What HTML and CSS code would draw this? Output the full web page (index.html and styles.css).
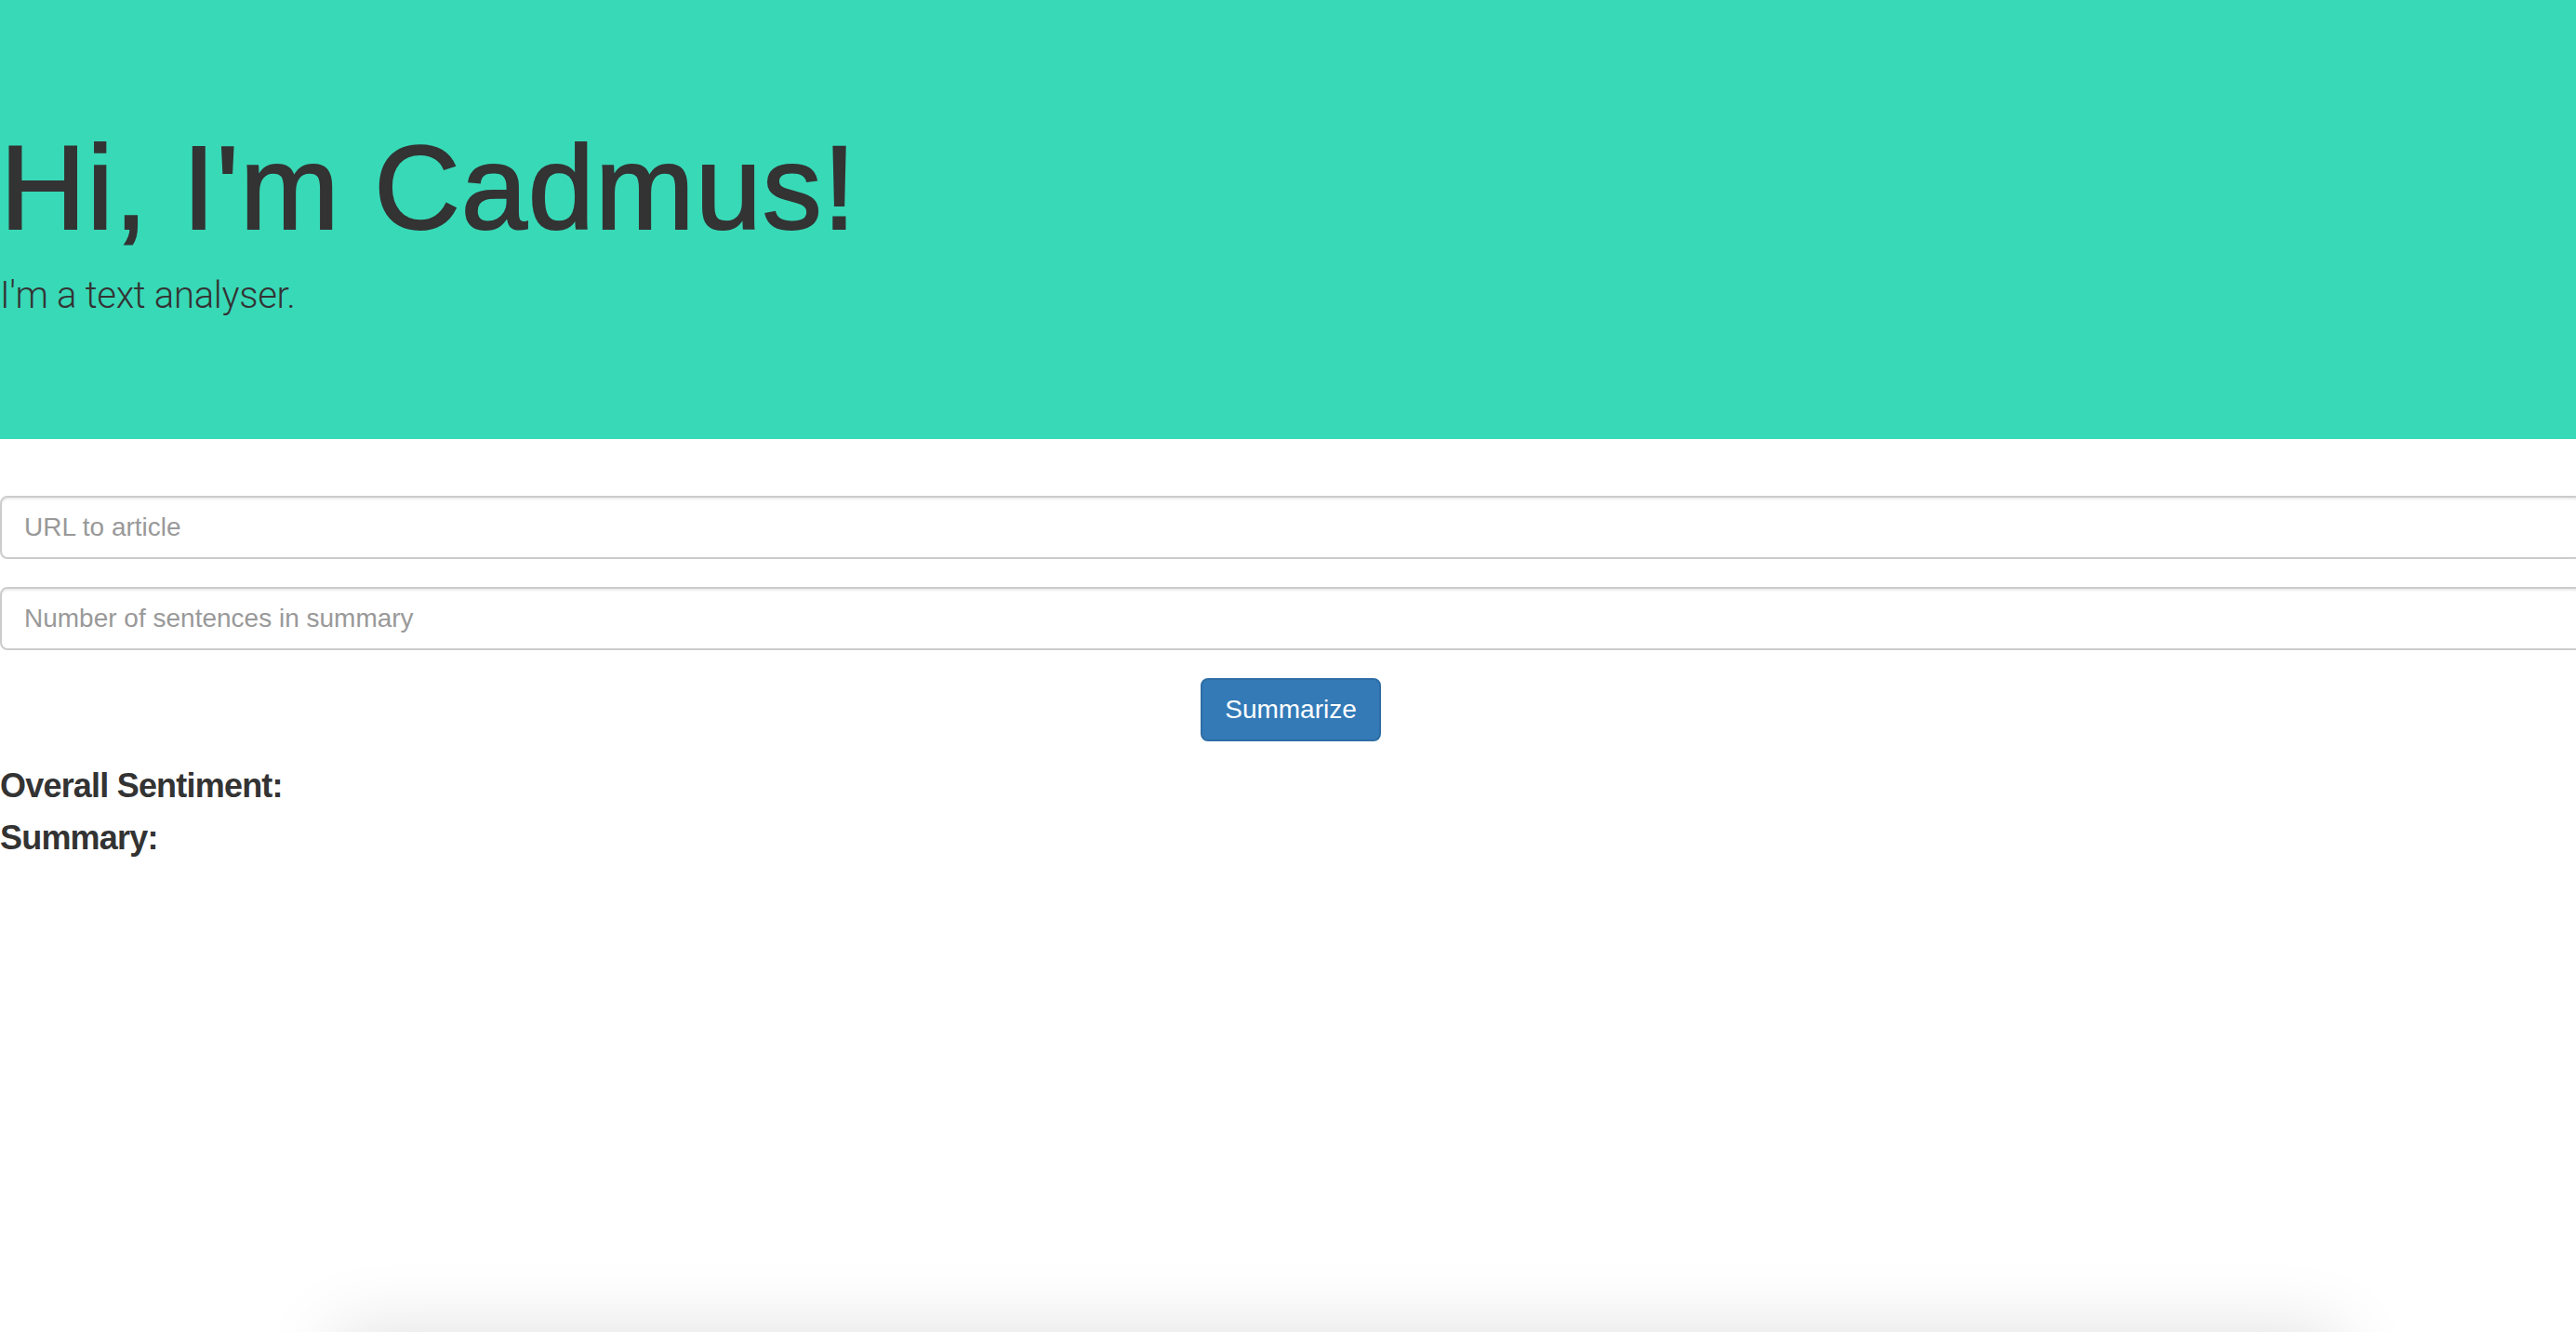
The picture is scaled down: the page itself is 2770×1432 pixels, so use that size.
FILE: index.html
```html
<!DOCTYPE html>
<html lang="en">
<head>
<meta charset="utf-8">
<title>Cadmus</title>
<link rel="stylesheet" href="styles.css">
</head>
<body>
<header class="hero">
  <h1 class="hero-title">Hi, I'm Cadmus!</h1>
  <p class="hero-lead">I'm a text analyser.</p>
</header>
<main class="content">
  <form class="form">
    <input class="field" type="text" placeholder="URL to article">
    <input class="field" type="text" placeholder="Number of sentences in summary">
    <div class="actions">
      <button class="btn" type="button">Summarize</button>
    </div>
  </form>
  <section class="results">
    <h4 class="result-title">Overall Sentiment:</h4>
    <h4 class="result-title">Summary:</h4>
  </section>
</main>
<div class="panel"></div>
</body>
</html>
```

FILE: styles.css
```css
html, body {
  margin: 0;
  padding: 0;
  height: 100%;
  overflow: hidden;
  background: #fff;
}

body {
  display: flex;
  flex-direction: column;
  font-family: "Liberation Sans", Arial, sans-serif;
  color: #333;
}

.hero {
  background: #38d9b7;
  height: 472px;
  box-sizing: border-box;
  padding-top: 132px;
  flex-shrink: 0;
}

.hero-title {
  margin: 0;
  font-family: "Liberation Sans", Arial, sans-serif;
  font-weight: 400;
  font-size: 128px;
  line-height: 1.1;
  letter-spacing: 1px;
  -webkit-text-stroke: 2px #333;
  color: #333;
}

.hero-lead {
  margin: 17px 0 0;
  font-family: "Roboto", "Liberation Sans", sans-serif;
  font-weight: 300;
  font-size: 40px;
  line-height: 1.4;
  letter-spacing: -0.3px;
  color: #333;
}

.content {
  flex: 1 1 auto;
  width: calc(100% + 6px);
}

.form {
  margin-top: 61px;
  display: flex;
  flex-direction: column;
  gap: 30px;
}

.field {
  display: block;
  box-sizing: border-box;
  width: 100%;
  height: 68px;
  margin: 0;
  padding: 12px 24px;
  border: 2px solid #ccc;
  border-radius: 8px;
  box-shadow: inset 0 2px 2px rgba(0, 0, 0, 0.075);
  font-family: "Liberation Sans", Arial, sans-serif;
  font-size: 28px;
  color: #555;
  background: #fff;
  outline: none;
}

.field::placeholder {
  color: #999;
}

.actions {
  display: flex;
  justify-content: center;
}

.btn {
  box-sizing: border-box;
  height: 68px;
  padding: 12px 24px;
  border: 2px solid #2e6da4;
  border-radius: 8px;
  background: #337ab7;
  color: #fff;
  font-family: "Liberation Sans", Arial, sans-serif;
  font-size: 28px;
  line-height: 40px;
  cursor: pointer;
}

.results {
  margin-top: 28px;
  display: flex;
  flex-direction: column;
  gap: 16px;
}

.result-title {
  margin: 0;
  font-size: 36px;
  line-height: 1.1;
  font-weight: 700;
  letter-spacing: -0.8px;
  color: #333;
}

.panel {
  flex-shrink: 0;
  height: 200px;
  margin: 0 0 -200px 360px;
  width: 2155px;
  background: #fff;
  box-shadow: 0 0 80px rgba(0, 0, 0, 0.13);
}
```
